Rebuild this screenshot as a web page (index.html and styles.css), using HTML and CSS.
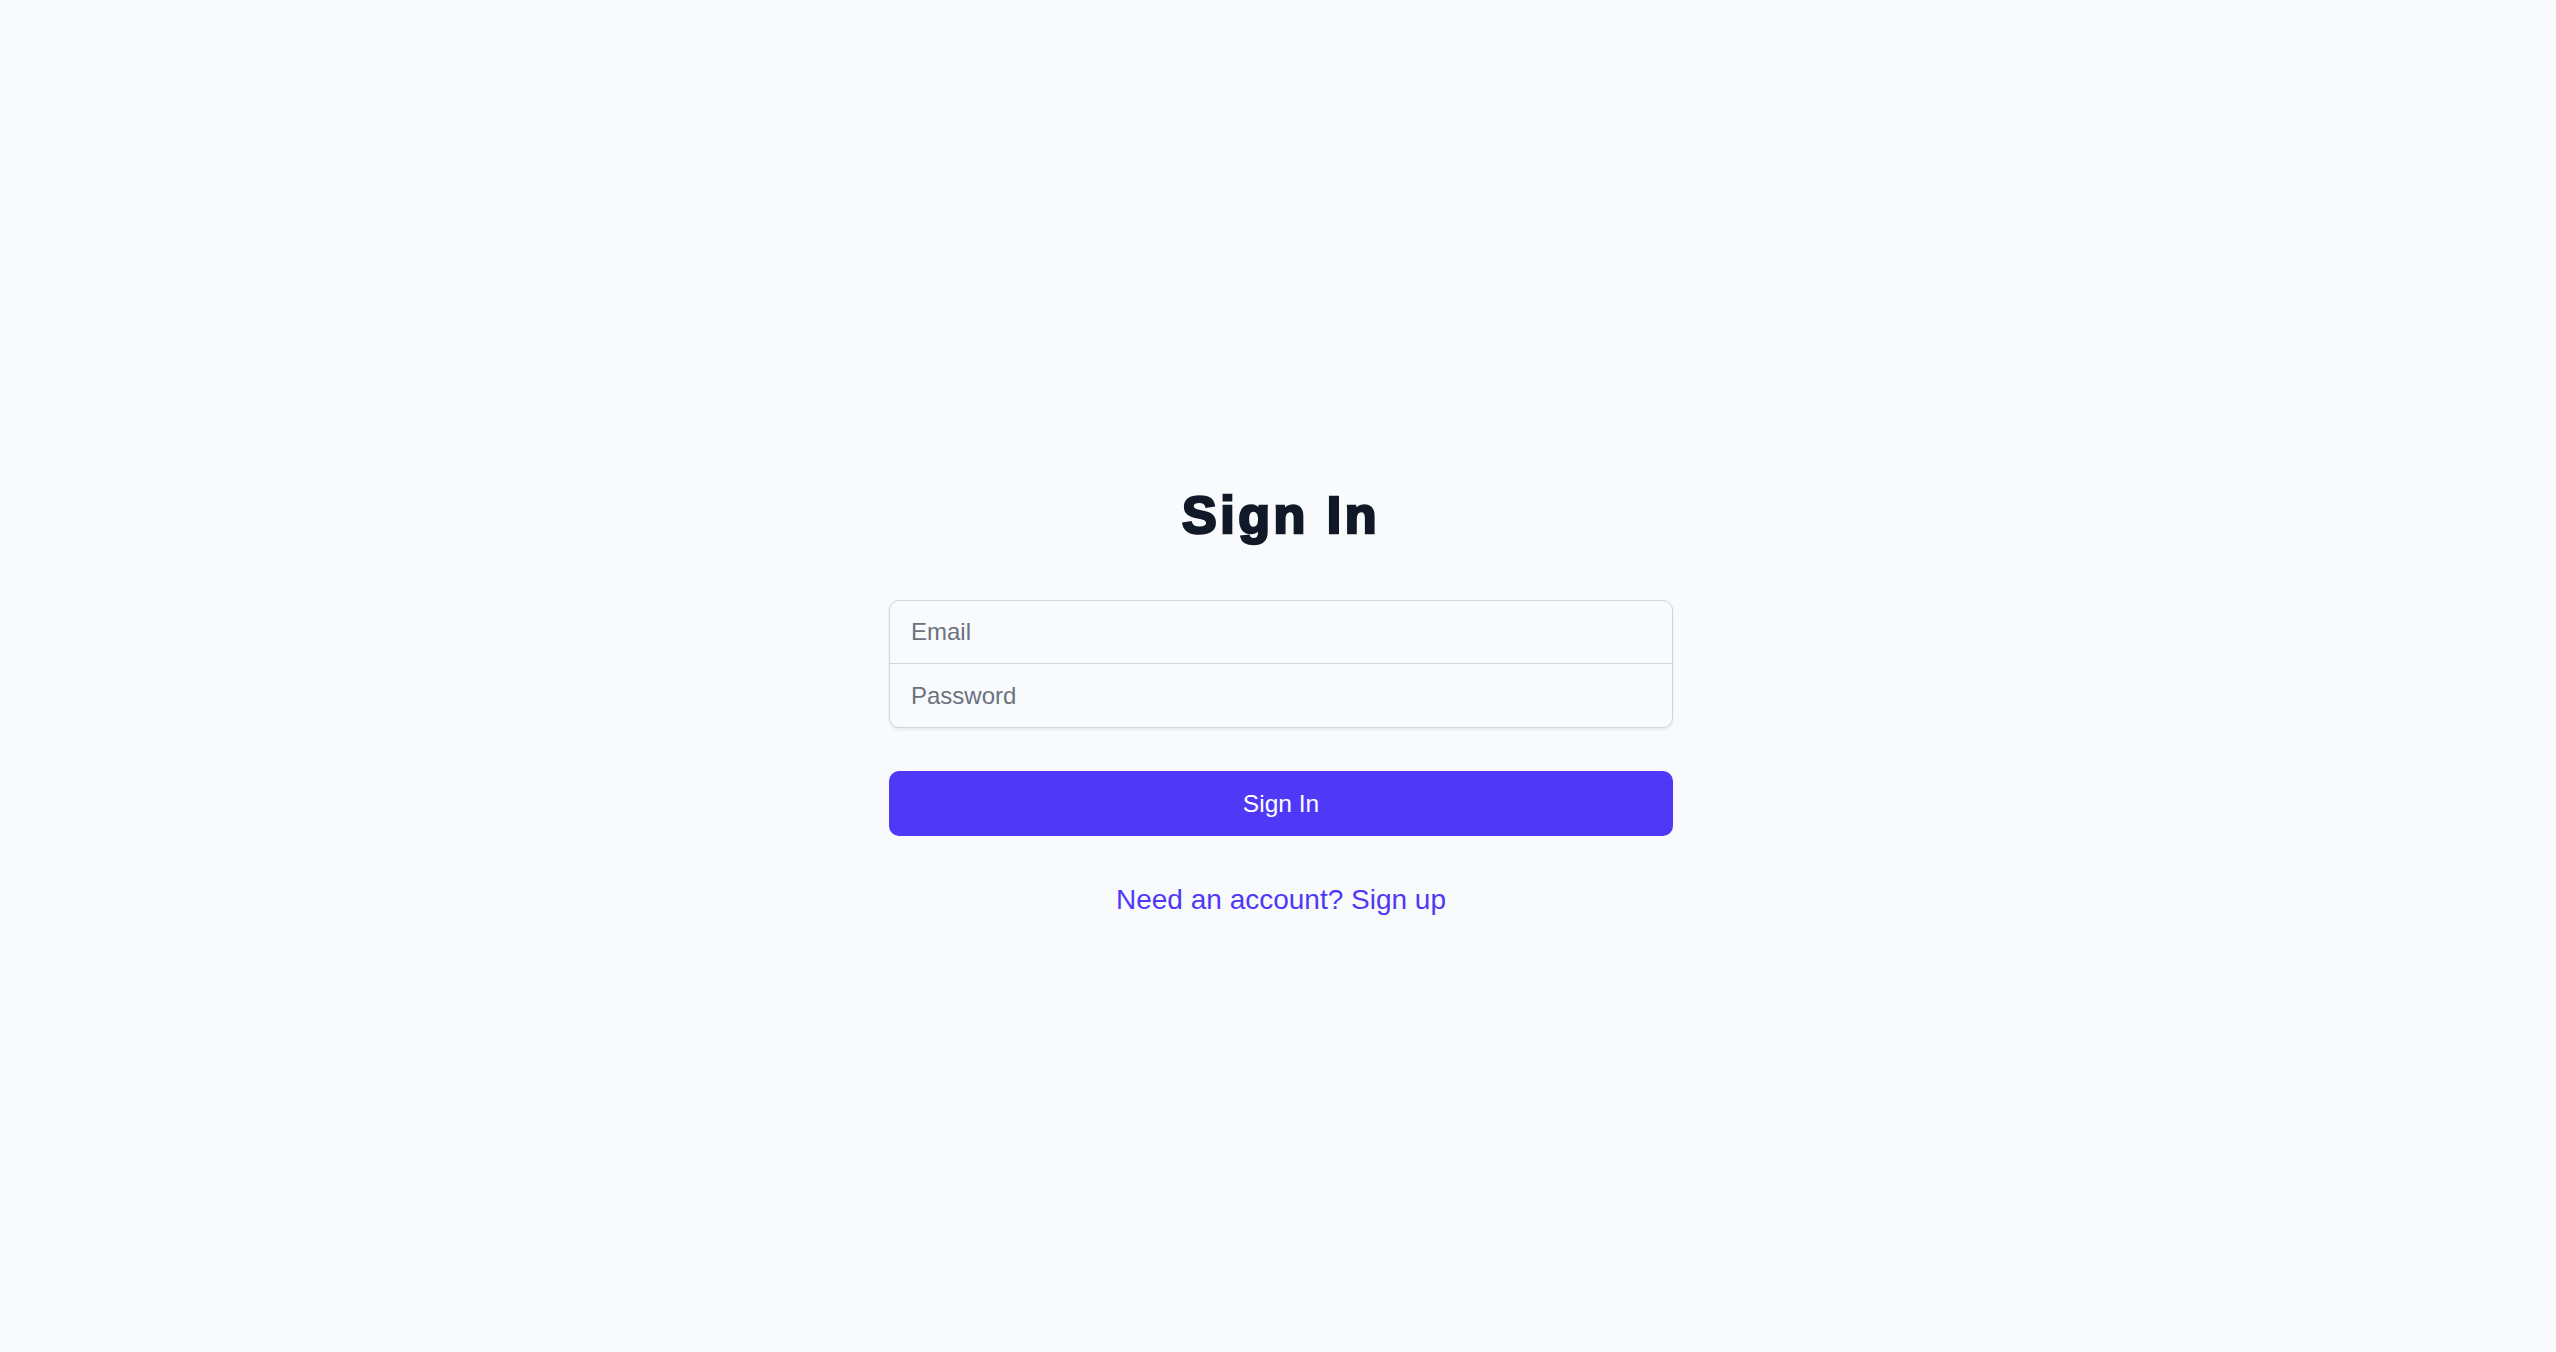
FILE: index.html
```html
<!DOCTYPE html>
<html lang="en">
<head>
<meta charset="utf-8">
<title>Sign In</title>
<link rel="stylesheet" href="styles.css">
</head>
<body>
<main class="page">
  <div class="card">
    <h1 class="title">Sign In</h1>
    <form class="form">
      <div class="field-group">
        <input class="field field-top" type="email" placeholder="Email">
        <input class="field field-bottom" type="password" placeholder="Password">
      </div>
      <button class="submit" type="button">Sign In</button>
    </form>
    <p class="switch"><a class="switch-link" href="#">Need an account? Sign up</a></p>
  </div>
</main>
</body>
</html>
```

FILE: styles.css
```css
html, body {
  margin: 0;
  padding: 0;
  background: #f9fafb;
}
body {
  font-family: "Liberation Sans", Arial, sans-serif;
  min-height: 100vh;
}
.page {
  padding-top: 484px;
  padding-left: 6px;
  display: flex;
  justify-content: center;
}
.card {
  width: 784px;
  display: flex;
  flex-direction: column;
}
.title {
  margin: 0;
  font-family: "Liberation Sans", Arial, sans-serif;
  font-weight: 700;
  font-size: 52px;
  line-height: 62px;
  letter-spacing: 3.5px;
  -webkit-text-stroke: 2.6px #111827;
  color: #111827;
  text-align: center;
}
.form {
  margin-top: 54px;
  display: flex;
  flex-direction: column;
  gap: 43px;
}
.field-group {
  border: 1px solid #d1d5db;
  border-radius: 10px;
  overflow: hidden;
  box-shadow: 0 2px 3px rgba(0, 0, 0, 0.07);
  display: flex;
  flex-direction: column;
  background: #f9fafb;
}
.field {
  box-sizing: border-box;
  height: 63px;
  border: 0;
  margin: 0;
  padding: 0 21px;
  background: transparent;
  font-family: "Liberation Sans", Arial, sans-serif;
  font-size: 24px;
  color: #111827;
  outline: none;
}
.field::placeholder {
  color: #6b7280;
  opacity: 1;
}
.field-top {
  border-bottom: 1px solid #d1d5db;
}
.submit {
  height: 65px;
  border: 0;
  border-radius: 10px;
  background: #4f39f6;
  color: #ffffff;
  font-family: "Liberation Sans", Arial, sans-serif;
  font-size: 24.5px;
  cursor: pointer;
}
.switch {
  margin: 43px 0 0;
  text-align: center;
  font-size: 28px;
  line-height: 42px;
}
.switch-link {
  color: #4f39f6;
  text-decoration: none;
}
```
